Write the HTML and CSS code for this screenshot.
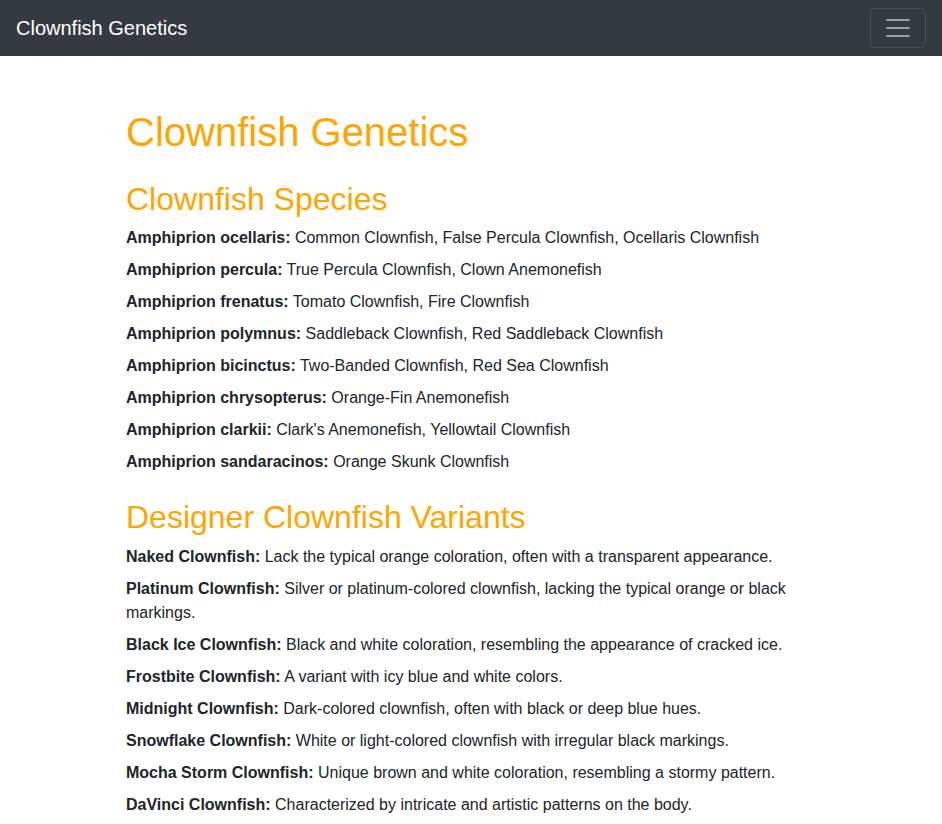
FILE: index.html
```html
<!DOCTYPE html>
<html lang="en">
<head>
  <meta charset="UTF-8" />
  <meta name="viewport" content="width=device-width, initial-scale=1.0"/>
  <title>Clownfish Genetics</title>
  <link rel="stylesheet" href="styles.css">
</head>
<body>

  <nav class="navbar">
    <a class="brand" href="#">Clownfish Genetics</a>
    <button class="toggler" type="button" aria-label="Toggle navigation">
      <svg width="30" height="30" viewBox="0 0 30 30">
        <path stroke="rgba(255,255,255,0.5)" stroke-linecap="round" stroke-miterlimit="10" stroke-width="2" d="M4 7h22M4 15h22M4 23h22"/>
      </svg>
    </button>
  </nav>

  <div class="container">
    <h1>Clownfish Genetics</h1>

    <!-- Species -->
    <section>
      <h2>Clownfish Species</h2>
      <p><strong>Amphiprion ocellaris:</strong> Common Clownfish, False Percula Clownfish, Ocellaris Clownfish</p>
      <p><strong>Amphiprion percula:</strong> True Percula Clownfish, Clown Anemonefish</p>
      <p><strong>Amphiprion frenatus:</strong> Tomato Clownfish, Fire Clownfish</p>
      <p><strong>Amphiprion polymnus:</strong> Saddleback Clownfish, Red Saddleback Clownfish</p>
      <p><strong>Amphiprion bicinctus:</strong> Two-Banded Clownfish, Red Sea Clownfish</p>
      <p><strong>Amphiprion chrysopterus:</strong> Orange-Fin Anemonefish</p>
      <p><strong>Amphiprion clarkii:</strong> Clark's Anemonefish, Yellowtail Clownfish</p>
      <p><strong>Amphiprion sandaracinos:</strong> Orange Skunk Clownfish</p>
    </section>

    <!-- Designer variants -->
    <section>
      <h2>Designer Clownfish Variants</h2>
      <p><strong>Naked Clownfish:</strong> Lack the typical orange coloration, often with a transparent appearance.</p>
      <p><strong>Platinum Clownfish:</strong> Silver or platinum-colored clownfish, lacking the typical orange or black markings.</p>
      <p><strong>Black Ice Clownfish:</strong> Black and white coloration, resembling the appearance of cracked ice.</p>
      <p><strong>Frostbite Clownfish:</strong> A variant with icy blue and white colors.</p>
      <p><strong>Midnight Clownfish:</strong> Dark-colored clownfish, often with black or deep blue hues.</p>
      <p><strong>Snowflake Clownfish:</strong> White or light-colored clownfish with irregular black markings.</p>
      <p><strong>Mocha Storm Clownfish:</strong> Unique brown and white coloration, resembling a stormy pattern.</p>
      <p><strong>DaVinci Clownfish:</strong> Characterized by intricate and artistic patterns on the body.</p>
    </section>
  </div>

</body>
</html>
```

FILE: styles.css
```css
* {
  box-sizing: border-box;
}

body {
  margin: 0;
  font-family: 'Liberation Sans', Arial, sans-serif;
  font-size: 16px;
  line-height: 1.5;
  color: #212529;
  background: #fff;
}

.navbar {
  display: flex;
  justify-content: space-between;
  align-items: center;
  padding: 8px 16px;
  background: #343a40;
}

.brand {
  color: #fff;
  font-size: 20px;
  line-height: 30px;
  text-decoration: none;
  padding: 5px 0;
}

.toggler {
  display: flex;
  padding: 4px 12px;
  background: transparent;
  border: 1px solid rgba(255,255,255,0.1);
  border-radius: 4px;
  cursor: pointer;
}

.container {
  max-width: 720px;
  margin: 52px auto 0;
  padding: 0 15px;
}

h1, h2 {
  color: #ffa500;
  font-weight: 500;
  line-height: 1.2;
  margin: 0 0 8px;
}

h1 {
  font-size: 40px;
}

h2 {
  font-size: 32px;
}

section {
  margin-top: 24px;
}

p {
  margin: 0 0 8px;
}

strong {
  font-weight: bold;
}
```
